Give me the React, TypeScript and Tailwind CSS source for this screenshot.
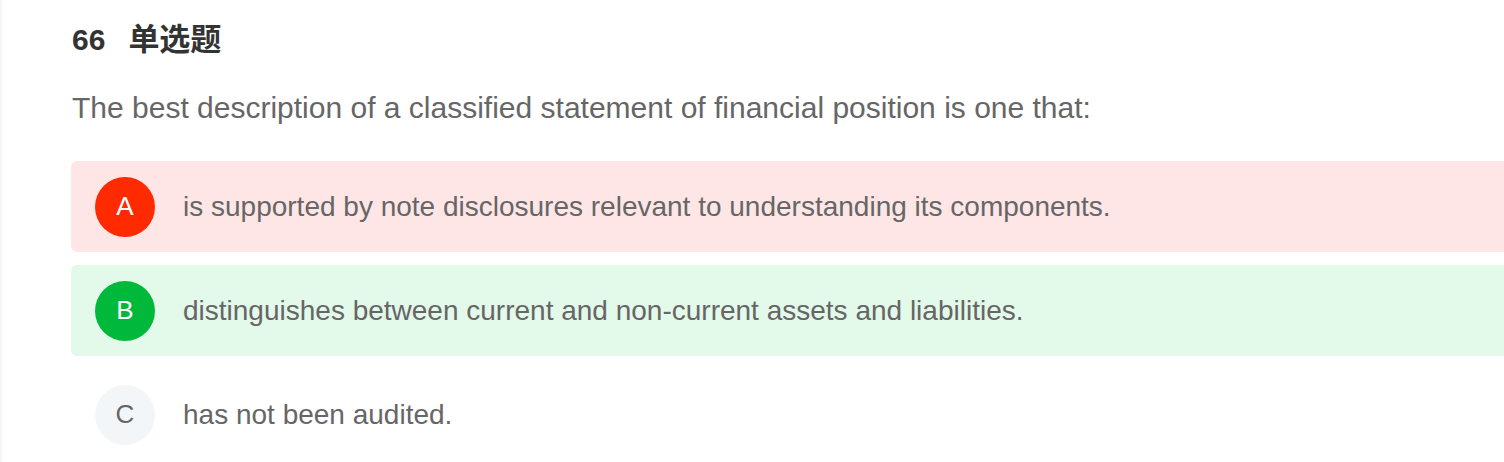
import React from "react";

type Status = "wrong" | "right" | "none";

interface Option {
  key: string;
  text: string;
  status: Status;
}

const options: Option[] = [
  {
    key: "A",
    text: "is supported by note disclosures relevant to understanding its components.",
    status: "wrong",
  },
  {
    key: "B",
    text: "distinguishes between current and non-current assets and liabilities.",
    status: "right",
  },
  { key: "C", text: "has not been audited.", status: "none" },
];

const rowClass: Record<Status, string> = {
  wrong: "bg-[#ffe6e6]",
  right: "bg-[#e3f9e9]",
  none: "bg-white",
};

const badgeClass: Record<Status, string> = {
  wrong: "bg-[#ff2a00] text-white",
  right: "bg-[#00b93a] text-white",
  none: "bg-[#f3f6f9] text-[#666666]",
};

const OptionRow = ({ option }: { option: Option }) => (
  <div
    className={`flex h-[91px] items-center gap-[28px] rounded-[6px] pl-6 ${rowClass[option.status]}`}
  >
    <span
      className={`flex h-[60px] w-[60px] shrink-0 items-center justify-center rounded-full text-[26px] ${badgeClass[option.status]}`}
    >
      {option.key}
    </span>
    <span className="text-[28px] text-[#666666]">{option.text}</span>
  </div>
);

export default function App() {
  return (
    <div
      className="h-[462px] w-[1504px] overflow-hidden border-l-2 border-[#f5f5f5] bg-white"
      style={{ fontFamily: '"Liberation Sans", "Noto Sans CJK SC", sans-serif' }}
    >
      <div className="-mr-[40px] pl-[69px] pt-[22px]">
        <h2 className="flex items-center text-[30px] font-bold leading-[36px] text-[#333333]">
          <span className="pl-[1px]">66</span>
          <span className="ml-[23px] text-[31px]">单选题</span>
        </h2>
        <p className="mt-[32px] pl-[1px] text-[30px] leading-[36px] text-[#666666]">
          The best description of a classified statement of financial position is one that:
        </p>
        <div className="mt-[35px] flex flex-col gap-[13px]">
          {options.map((o) => (
            <OptionRow key={o.key} option={o} />
          ))}
        </div>
      </div>
    </div>
  );
}
